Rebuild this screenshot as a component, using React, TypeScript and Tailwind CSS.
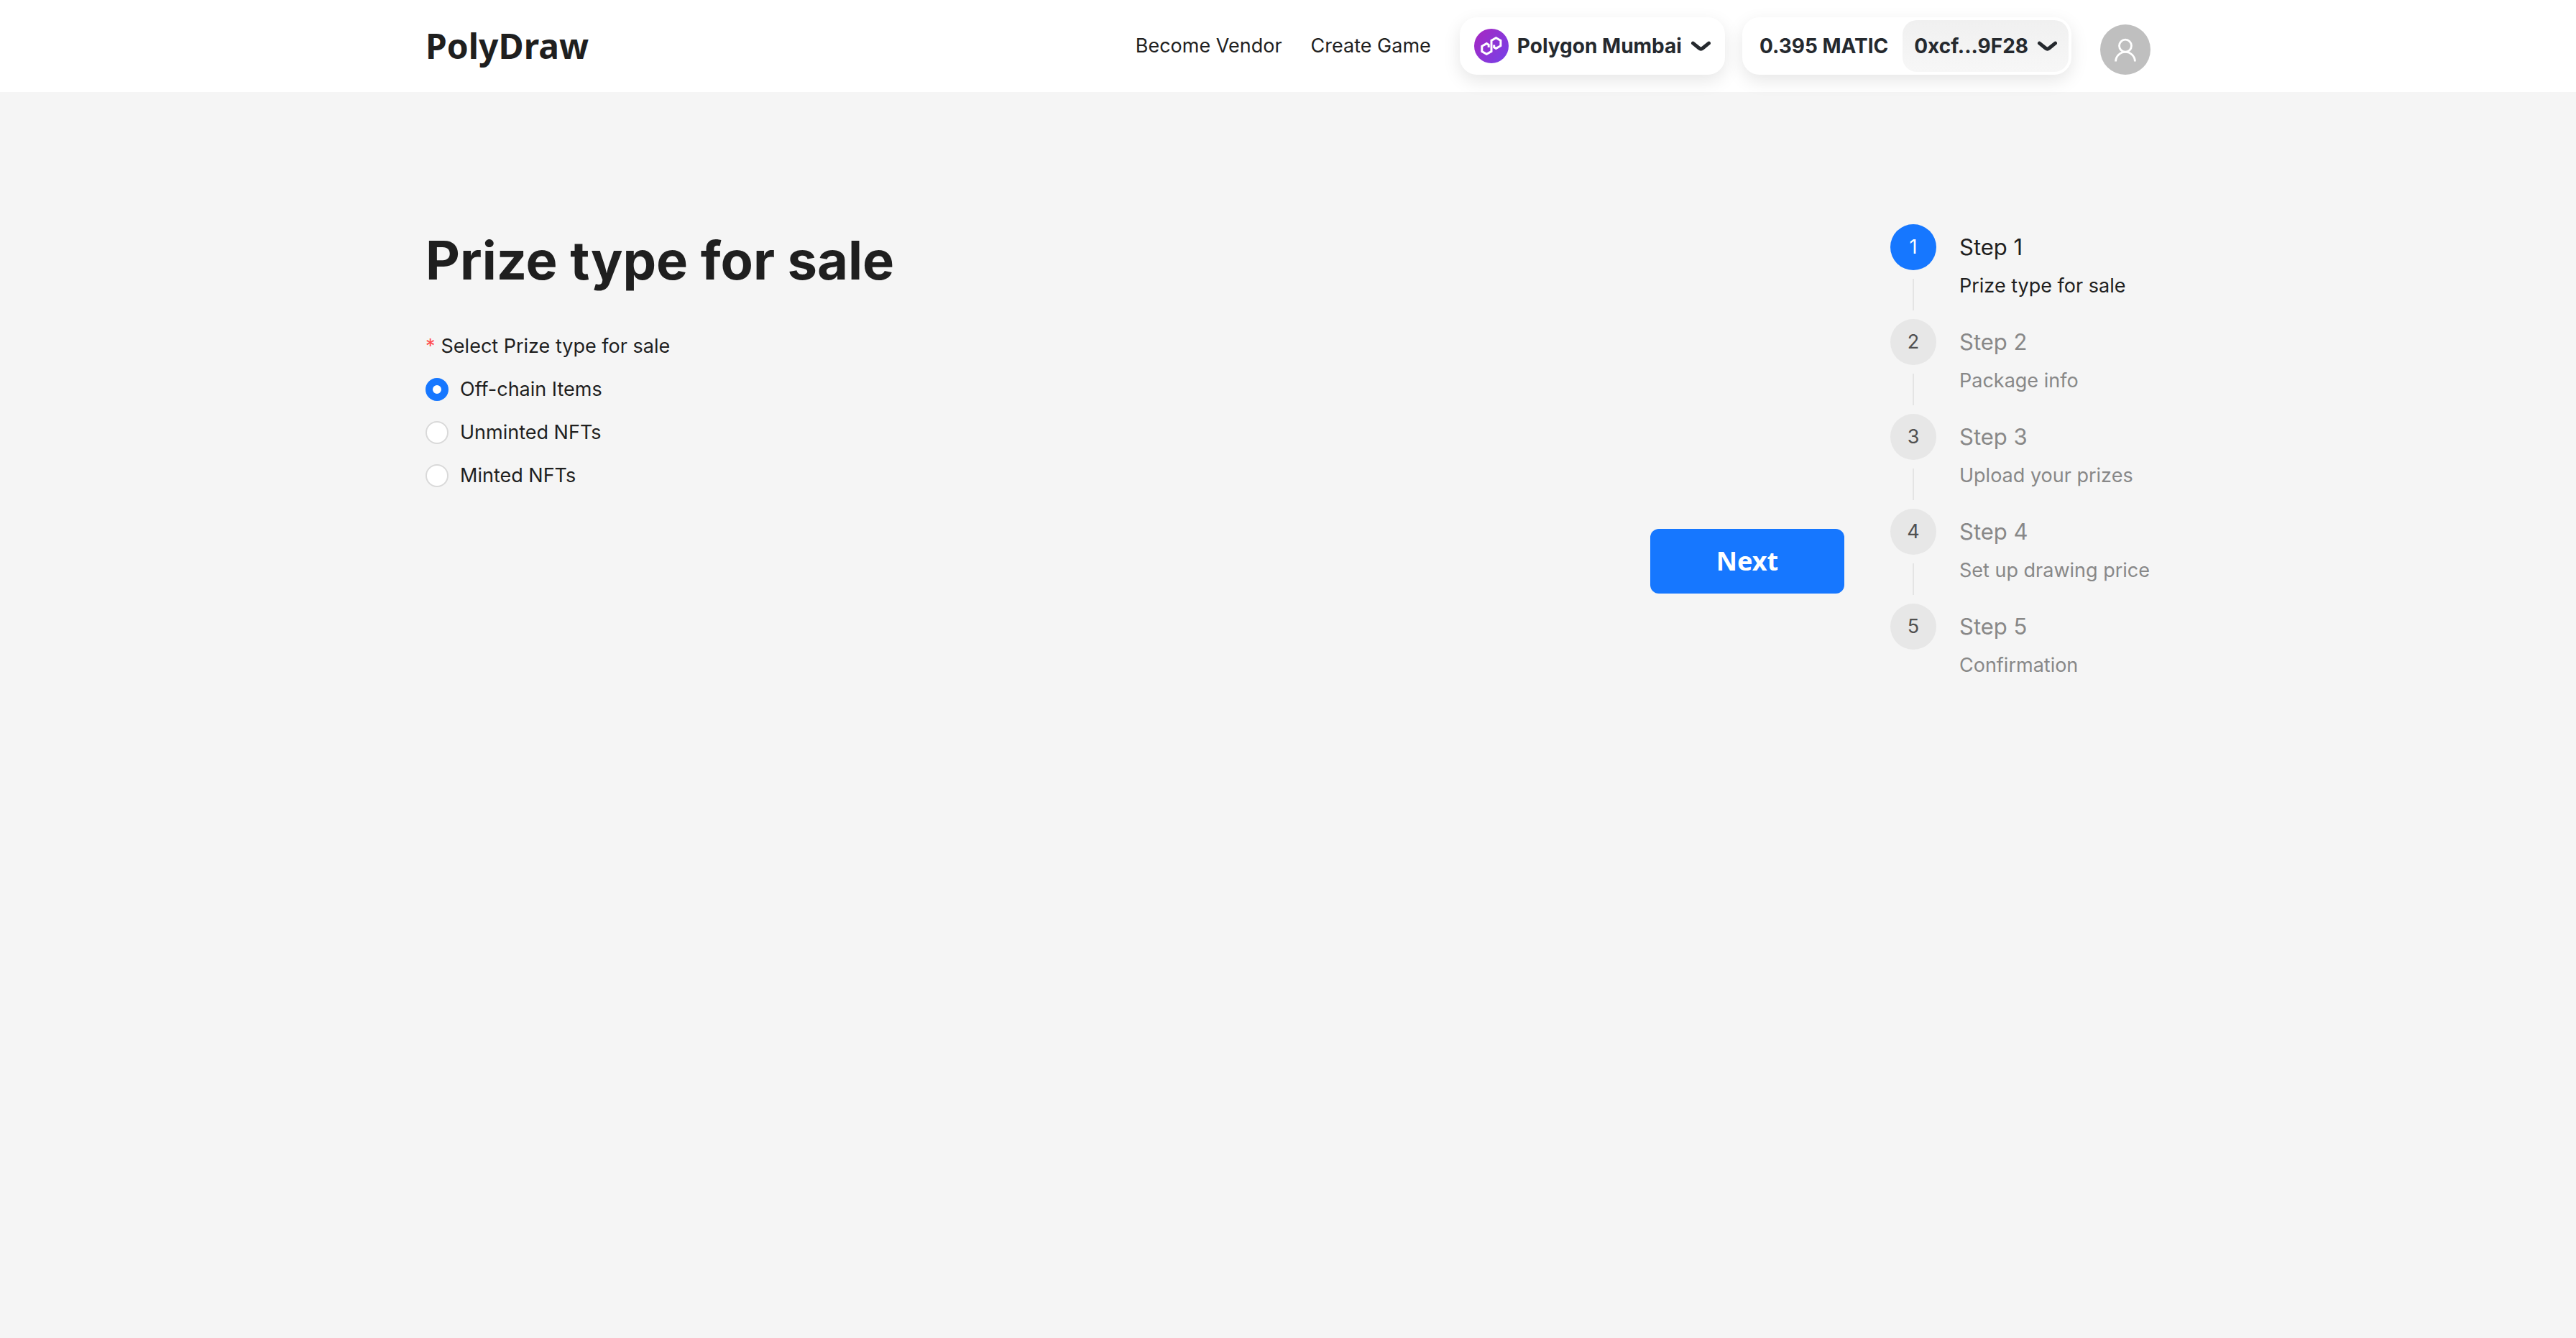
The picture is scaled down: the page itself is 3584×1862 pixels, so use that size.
import { useState } from "react";

const steps = [
  { title: "Step 1", description: "Prize type for sale" },
  { title: "Step 2", description: "Package info" },
  { title: "Step 3", description: "Upload your prizes" },
  { title: "Step 4", description: "Set up drawing price" },
  { title: "Step 5", description: "Confirmation" },
];

const prizeTypes = ["Off-chain Items", "Unminted NFTs", "Minted NFTs"];

function Chevron() {
  return (
    <svg className="h-3.5 w-7" viewBox="0 0 14 7" fill="none" aria-hidden="true">
      <path
        d="M12.75 1.54001L8.51647 5.0038C7.77974 5.60658 6.72026 5.60658 5.98352 5.0038L1.75 1.54001"
        stroke="currentColor"
        strokeWidth="2.5"
        strokeLinecap="round"
        strokeLinejoin="round"
      />
    </svg>
  );
}

function PolygonIcon() {
  return (
    <svg className="size-12" viewBox="0 0 48 48" fill="none" aria-hidden="true">
      <defs>
        <linearGradient id="polygon" x1="4" y1="8" x2="44" y2="40" gradientUnits="userSpaceOnUse">
          <stop stopColor="#A229C5" />
          <stop offset="1" stopColor="#7B3FE4" />
        </linearGradient>
      </defs>
      <circle cx="24" cy="24" r="24" fill="url(#polygon)" />
      <path
        d="M20.2 26V22.4L17.3 20.6L10.8 24.3V31.6L17.3 35.3L24 31.6V16.4L30.4 12.7L36.9 16.4V23.7L30.4 27.4L27.7 25.8V22.4"
        stroke="white"
        strokeWidth="3"
      />
    </svg>
  );
}

function UserIcon() {
  return (
    <svg className="size-9" viewBox="0 0 36 36" fill="none" stroke="currentColor" strokeWidth="2.8" aria-hidden="true">
      <circle cx="18" cy="12.7" r="8.5" />
      <path d="M4.6 34.5A13.4 13.2 0 0 1 31.4 34.5" />
    </svg>
  );
}

function Header() {
  return (
    <header className="bg-white">
      <div className="mx-auto flex h-32 max-w-[2400px] items-center justify-between">
        <a href="#" className="font-['Noto_Sans',sans-serif] text-5xl font-bold text-[#1f1f1f]">
          PolyDraw
        </a>
        <nav className="flex items-center">
          <a href="#" className="mr-10">Become Vendor</a>
          <a href="#" className="mr-10">Create Game</a>
          <button
            type="button"
            className="mr-6 flex h-20 items-center gap-3 rounded-3xl bg-white px-5 text-[28px] font-bold text-[#25292e] shadow-[0_8px_24px_rgba(0,0,0,0.1)]"
          >
            <PolygonIcon />
            Polygon Mumbai
            <Chevron />
          </button>
          <button
            type="button"
            className="mr-10 flex h-20 items-center rounded-3xl bg-white p-1 text-[28px] font-bold text-[#25292e] shadow-[0_8px_24px_rgba(0,0,0,0.1)]"
          >
            <span className="px-5">0.395 MATIC</span>
            <span className="flex h-full items-center gap-3 rounded-[20px] bg-linear-to-b from-[#f0f0f0] to-[#f7f7f7] px-4">
              0xcf...9F28
              <Chevron />
            </span>
          </button>
          <button
            type="button"
            aria-label="Account"
            className="flex size-[70px] items-center justify-center self-end rounded-full bg-[#bfbfbf] text-white"
          >
            <UserIcon />
          </button>
        </nav>
      </div>
    </header>
  );
}

function PrizeForm() {
  const [selected, setSelected] = useState(prizeTypes[0]);
  return (
    <form className="flex flex-1 flex-col" onSubmit={(e) => e.preventDefault()}>
      <h1 className="text-[74px] leading-[100px] font-bold">Prize type for sale</h1>
      <fieldset className="mt-10 flex flex-col">
        <legend className="flex h-[60px] items-center gap-2">
          <span className="text-[#ff4d4f]">*</span>
          Select Prize type for sale
        </legend>
        {prizeTypes.map((type) => (
          <label key={type} className="flex h-[60px] items-center gap-4">
            <input
              type="radio"
              name="prize-type"
              checked={selected === type}
              onChange={() => setSelected(type)}
              className="size-8 appearance-none rounded-full border-2 border-[#d9d9d9] bg-white checked:border-[10px] checked:border-[#1677ff]"
            />
            {type}
          </label>
        ))}
      </fieldset>
      <button
        type="submit"
        className="mt-11 h-[90px] w-[270px] self-end rounded-xl bg-[#1677ff] font-['Noto_Sans',sans-serif] text-4xl font-bold text-white"
      >
        Next
      </button>
    </form>
  );
}

function Steps() {
  return (
    <ol className="min-w-[362px]">
      {steps.map((step, i) => (
        <li key={step.title} className="flex h-[132px] gap-8">
          <div className="flex w-16 flex-col items-center">
            <span
              className={
                i === 0
                  ? "flex size-16 items-center justify-center rounded-full bg-[#1677ff] text-white"
                  : "flex size-16 items-center justify-center rounded-full bg-[#e7e7e7] text-[#505050]"
              }
            >
              {i + 1}
            </span>
            {i < steps.length - 1 && <span className="my-3 w-0.5 flex-1 bg-[#e4e4e4]" />}
          </div>
          <div className={i === 0 ? "" : "text-[#888888]"}>
            <p className="text-[31px] leading-16">{step.title}</p>
            <p className="leading-11">{step.description}</p>
          </div>
        </li>
      ))}
    </ol>
  );
}

export default function App() {
  return (
    <div className="min-h-screen bg-[#f5f5f5] font-[Inter,sans-serif] text-[27px] text-[#1f1f1f]">
      <Header />
      <main className="mx-auto flex max-w-[2400px] items-start gap-16 pt-[184px]">
        <PrizeForm />
        <Steps />
      </main>
    </div>
  );
}
